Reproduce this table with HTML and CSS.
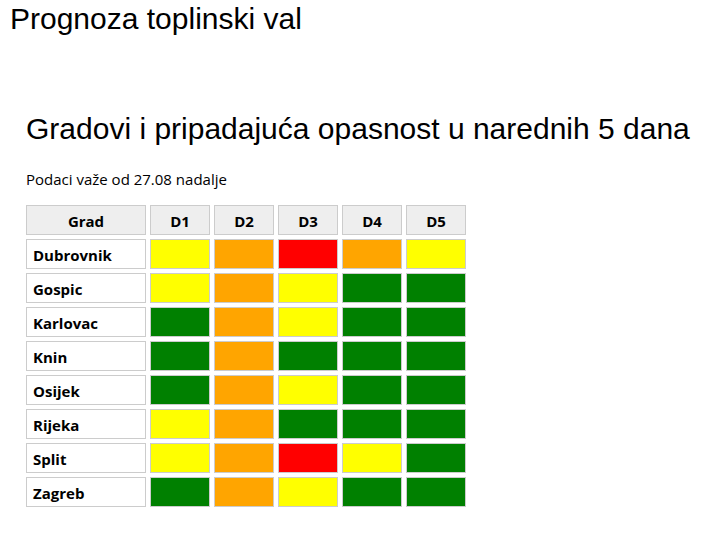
FILE: index.html
```html
<!DOCTYPE html>
<html lang="hr">
<head>
<meta charset="utf-8">
<title>Prognoza toplinski val</title>
<link rel="stylesheet" href="styles.css">
</head>
<body>
<h1 class="page-title">Prognoza toplinski val</h1>
<section class="panel">
  <h2 class="panel-title">Gradovi i pripadajuća opasnost u narednih 5 dana</h2>
  <p class="note">Podaci važe od 27.08 nadalje</p>
  <div class="grid">
    <div class="cell head">Grad</div>
    <div class="cell head">D1</div>
    <div class="cell head">D2</div>
    <div class="cell head">D3</div>
    <div class="cell head">D4</div>
    <div class="cell head">D5</div>

    <div class="cell city">Dubrovnik</div>
    <div class="cell y"></div><div class="cell o"></div><div class="cell r"></div><div class="cell o"></div><div class="cell y"></div>

    <div class="cell city">Gospic</div>
    <div class="cell y"></div><div class="cell o"></div><div class="cell y"></div><div class="cell g"></div><div class="cell g"></div>

    <div class="cell city">Karlovac</div>
    <div class="cell g"></div><div class="cell o"></div><div class="cell y"></div><div class="cell g"></div><div class="cell g"></div>

    <div class="cell city">Knin</div>
    <div class="cell g"></div><div class="cell o"></div><div class="cell g"></div><div class="cell g"></div><div class="cell g"></div>

    <div class="cell city">Osijek</div>
    <div class="cell g"></div><div class="cell o"></div><div class="cell y"></div><div class="cell g"></div><div class="cell g"></div>

    <div class="cell city">Rijeka</div>
    <div class="cell y"></div><div class="cell o"></div><div class="cell g"></div><div class="cell g"></div><div class="cell g"></div>

    <div class="cell city">Split</div>
    <div class="cell y"></div><div class="cell o"></div><div class="cell r"></div><div class="cell y"></div><div class="cell g"></div>

    <div class="cell city">Zagreb</div>
    <div class="cell g"></div><div class="cell o"></div><div class="cell y"></div><div class="cell g"></div><div class="cell g"></div>
  </div>
</section>
</body>
</html>
```
FILE: styles.css
```css
html, body {
  margin: 0;
  padding: 0;
  background: #fff;
  color: #000;
}
body {
  padding: 0 8px;
}
.page-title {
  margin: 2px 0 0 2px;
  font-family: "Liberation Sans", Arial, sans-serif;
  font-weight: normal;
  font-size: 30px;
  line-height: 34px;
}
.panel {
  margin-top: 76px;
  padding-left: 18px;
}
.panel-title {
  margin: 0;
  font-family: "Liberation Sans", Arial, sans-serif;
  font-weight: normal;
  font-size: 30px;
  line-height: 34px;
}
.note {
  margin: 23px 0 0 0;
  font-family: "Open Sans", "Noto Sans", sans-serif;
  font-size: 15px;
  line-height: 20px;
}
.grid {
  margin-top: 16px;
  display: grid;
  grid-template-columns: 120px repeat(5, 60px);
  grid-auto-rows: 30px;
  gap: 4px;
  font-family: "Open Sans", "Noto Sans", sans-serif;
  font-size: 15px;
  font-weight: bold;
}
.cell {
  box-sizing: border-box;
  border: 1px solid #ccc;
  padding-top: 2px;
  display: flex;
  align-items: center;
}
.head {
  background: #eee;
  justify-content: center;
}
.city {
  background: #fff;
  padding-left: 6px;
}
.y { background: #ffff00; }
.o { background: #ffa500; }
.r { background: #ff0000; }
.g { background: #008000; }
```
